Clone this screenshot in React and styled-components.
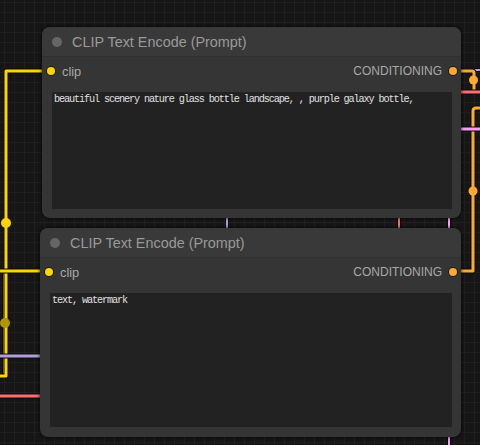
import React from "react";
import styled, { createGlobalStyle } from "styled-components";

const Global = createGlobalStyle`
  html, body { margin: 0; padding: 0; background: #161616; }
  body { font-family: "Liberation Sans", Arial, sans-serif; }
`;

const Canvas = styled.div`
  position: relative;
  width: 480px;
  height: 445px;
  overflow: hidden;
  background-color: #161616;
  background-image:
    linear-gradient(to right, #1f1f1f 1px, transparent 1px),
    linear-gradient(to bottom, #1f1f1f 1px, transparent 1px);
  background-size: 10px 10px;
  background-position: 4px 2px;
`;

const WireLayer = styled.svg`
  position: absolute;
  left: 0;
  top: 0;
  width: 480px;
  height: 445px;
`;

const Node = styled.div`
  position: absolute;
  left: ${(p) => p.$x}px;
  top: ${(p) => p.$y}px;
  width: ${(p) => p.$w}px;
  height: ${(p) => p.$h}px;
  display: flex;
  flex-direction: column;
  background: #353535;
  border-radius: 8px;
  box-shadow: 0 0 3px 1px rgba(0, 0, 0, 0.55);
  box-sizing: border-box;
`;

const Title = styled.div`
  height: 30px;
  flex: none;
  display: flex;
  align-items: center;
  background: #393939;
  border-radius: 8px 8px 0 0;
  border-bottom: 1px solid #303030;
  box-sizing: border-box;
  padding-left: 10px;
`;

const TitleDot = styled.span`
  width: 10px;
  height: 10px;
  border-radius: 50%;
  background: #666;
  flex: none;
`;

const TitleText = styled.span`
  margin-left: 10px;
  font-size: 14.4px;
  color: #9a9a9a;
  white-space: nowrap;
`;

const SlotRow = styled.div`
  height: 28px;
  flex: none;
  display: flex;
  align-items: center;
  justify-content: space-between;
  padding: 0 4px 0 5px;
`;

const Slot = styled.div`
  display: flex;
  align-items: center;
  gap: 7px;
  flex-direction: ${(p) => (p.$out ? "row-reverse" : "row")};
`;

const SlotDot = styled.span`
  width: 8px;
  height: 8px;
  border-radius: 50%;
  background: ${(p) => p.$color};
  box-shadow: 0 0 0 1px #1c1c1c;
  flex: none;
`;

const SlotLabel = styled.span`
  font-size: ${(p) => (p.$out ? 12 : 12.8)}px;
  color: #a8a8a8;
  white-space: nowrap;
`;

const WidgetArea = styled.div`
  flex: 1;
  display: flex;
  padding: 7px 9px ${(p) => p.$pb}px 10px;
`;

const PromptBox = styled.div`
  flex: 1;
  background: #222222;
  padding: 2px 2px;
  font-family: "Liberation Mono", "DejaVu Sans Mono", monospace;
  font-size: 10.2px;
  letter-spacing: -1.12px;
  line-height: 12px;
  color: #e0e0e0;
  white-space: pre-wrap;
`;

function ClipNode({ x, y, w, h, pb, text }) {
  return (
    <Node $x={x} $y={y} $w={w} $h={h}>
      <Title>
        <TitleDot />
        <TitleText>CLIP Text Encode (Prompt)</TitleText>
      </Title>
      <SlotRow>
        <Slot>
          <SlotDot $color="#FFD500" />
          <SlotLabel>clip</SlotLabel>
        </Slot>
        <Slot $out>
          <SlotDot $color="#FFA931" />
          <SlotLabel $out>CONDITIONING</SlotLabel>
        </Slot>
      </SlotRow>
      <WidgetArea $pb={pb}>
        <PromptBox>{text}</PromptBox>
      </WidgetArea>
    </Node>
  );
}

function Wire({ d, color, w = 3 }) {
  return (
    <g fill="none" strokeLinejoin="round" strokeLinecap="butt">
      <path d={d} stroke="#0c0c0c" strokeWidth={w + 2} />
      <path d={d} stroke={color} strokeWidth={w} />
    </g>
  );
}

export default function App() {
  const Y = "#FFD500";
  const O = "#FFA931";
  const P = "#B39DDB";
  const R = "#FF6E6E";
  const K = "#FF9CF9";
  return (
    <>
      <Global />
      <Canvas>
        <WireLayer viewBox="0 0 480 445">
          <Wire d="M0,376 H4 V271 H42" color="#b89c00" w={2} />
          <Wire d="M0,376 H6 V71 H44" color={Y} />
          <Wire d="M0,271 H42" color={Y} />
          <circle cx="6" cy="223" r="5" fill={Y} />
          <circle cx="5" cy="323" r="5" fill="#b39500" />
          <Wire d="M0,356 H42" color={P} />
          <Wire d="M0,396 H42" color={R} />
          <Wire d="M227,214 V232" color={P} w={2} />
          <Wire d="M399,214 V232" color={R} w={2} />
          <Wire d="M449,214 V232" color={K} w={2} />
          <Wire d="M449,432 V445" color={K} w={2} />
          <Wire d="M474,70 H480" color={P} w={2} />
          <Wire d="M456,71 H472 Q474,71 474,73 V92" color={O} />
          <circle cx="473.5" cy="80" r="4.5" fill={O} />
          <Wire d="M456,271 H473 V111 Q473,108 476,108 H480" color={O} />
          <circle cx="473" cy="191" r="4.5" fill={O} />
          <Wire d="M456,92 H480" color={R} />
          <Wire d="M456,129 H480" color={K} />
        </WireLayer>
        <ClipNode
          x={42}
          y={27}
          w={419}
          h={191}
          pb={9}
          text="beautiful scenery nature glass bottle landscape, , purple galaxy bottle,"
        />
        <ClipNode x={40} y={228} w={421} h={209} pb={10} text="text, watermark" />
      </Canvas>
    </>
  );
}
